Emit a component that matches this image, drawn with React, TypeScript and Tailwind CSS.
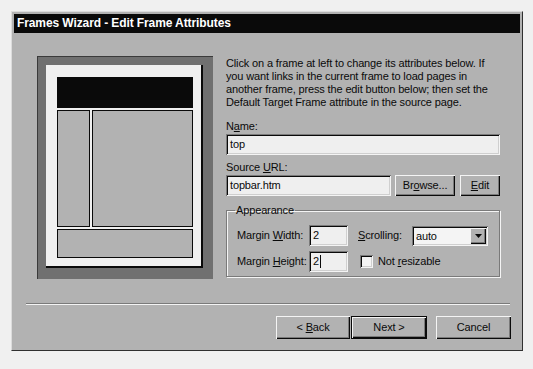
import type { ReactNode } from "react"

const raised =
    "bg-[#b2b2b2] shadow-[inset_1px_1px_0_#f4f4f4,inset_-1px_-1px_0_#0a0a0a,inset_-2px_-2px_0_#7a7a7a]"
const sunken =
    "bg-[#efefef] shadow-[inset_1px_1px_0_#7a7a7a,inset_-1px_-1px_0_#f4f4f4,inset_2px_2px_0_#0a0a0a,inset_-2px_-2px_0_#cfcfcf]"

const Key = ({ children }: { children: ReactNode }) => <span className="underline underline-offset-[1px]">{children}</span>

const Button = ({ children, width, isDefault }: { children: ReactNode; width: string; isDefault?: boolean }) => (
    <div className={`${width} flex ${isDefault ? "border border-[#0a0a0a]" : ""}`}>
        <div className={`flex-1 flex items-center justify-center ${raised}`}>
            <span className="whitespace-pre">{children}</span>
        </div>
    </div>
)

const FramePreview = () => (
    <div className="w-[176px] h-[223px] bg-[#707070] border-l border-t border-[#3a3a3a] border-r-[#f4f4f4] border-b-[#f4f4f4] pt-[8px] pl-[8px]">
        <div className="w-[157px] h-[203px] bg-[#f0f0f0] border-r-2 border-b-2 border-[#0a0a0a] pt-[12px] pl-[11px] flex flex-col gap-[2px]">
            <div className="w-[136px] h-[31px] bg-[#0a0a0a]" />
            <div className="flex gap-[2px]">
                <div className="w-[33px] h-[117px] bg-[#b2b2b2] border border-[#0a0a0a]" />
                <div className="w-[101px] h-[117px] bg-[#b2b2b2] border border-[#0a0a0a]" />
            </div>
            <div className="w-[136px] h-[29px] bg-[#b2b2b2] border border-[#0a0a0a]" />
        </div>
    </div>
)

export default function App() {
    return (
        <div
            className="w-[533px] h-[369px] bg-[#f0f0f0] pt-[11px] pl-[11px] text-[11px] tracking-[-0.14px] text-[#0a0a0a] overflow-hidden"
            style={{ fontFamily: '"Liberation Sans", Arial, sans-serif' }}
        >
            <div className="w-[512px] h-[340px] bg-[#b2b2b2] border border-[#dcdcdc] border-r-[#303030] border-b-[#303030] p-[2px] flex flex-col">
                <div className="h-[19px] bg-[#0a0a0a] text-white font-bold text-[12px] tracking-[-0.1px] leading-[19px] pl-[3px]">
                    Frames Wizard - Edit Frame Attributes
                </div>

                <div className="flex gap-[13px] pt-[23px] pl-[23px]">
                    <FramePreview />

                    <div className="w-[274px] flex flex-col">
                        <p className="leading-[13px] mt-[1px]">
                            Click on a frame at left to change its attributes below. If
                            <br />
                            you want links in the current frame to load pages in
                            <br />
                            another frame, press the edit button below; then set the
                            <br />
                            Default Target Frame attribute in the source page.
                        </p>

                        <div className="mt-[11px] leading-[13px]">
                            N<Key>a</Key>me:
                        </div>
                        <div className={`mt-[1px] h-[21px] w-[274px] pl-[4px] leading-[21px] ${sunken}`}>top</div>

                        <div className="mt-[6px] leading-[13px]">
                            Source <Key>U</Key>RL:
                        </div>
                        <div className="mt-[1px] flex h-[21px]">
                            <div className={`w-[165px] pl-[4px] leading-[21px] ${sunken}`}>topbar.htm</div>
                            <div className="ml-[4px] flex">
                                <Button width="w-[60px]">
                                    Br<Key>o</Key>wse...
                                </Button>
                            </div>
                            <div className="ml-[5px] flex">
                                <Button width="w-[40px]">
                                    <Key>E</Key>dit
                                </Button>
                            </div>
                        </div>

                        <fieldset className="mt-[8px] h-[73px] border border-[#7a7a7a] shadow-[1px_1px_0_#f4f4f4,inset_1px_1px_0_#f4f4f4] px-[10px]">
                            <legend className="ml-[-2px] px-[1px] leading-[13px]">Appearance</legend>
                            <div className="mt-[8px] flex items-center h-[21px]">
                                <span className="w-[72px]">
                                    Margin <Key>W</Key>idth:
                                </span>
                                <div className={`w-[39px] h-[21px] pl-[4px] leading-[21px] ${sunken}`}>2</div>
                                <span className="ml-[10px] w-[54px]">
                                    <Key>S</Key>crolling:
                                </span>
                                <div className={`w-[76px] h-[20px] flex p-[2px] ${sunken} bg-[#f4f4f4]`}>
                                    <span className="flex-1 pl-[2px] leading-[16px]">auto</span>
                                    <div className={`w-[16px] h-[16px] flex items-center justify-center ${raised}`}>
                                        <svg width="7" height="4" viewBox="0 0 7 4">
                                            <path d="M0 0h7L3.5 4z" fill="#0a0a0a" />
                                        </svg>
                                    </div>
                                </div>
                            </div>
                            <div className="mt-[5px] flex items-center h-[21px]">
                                <span className="w-[72px]">
                                    Margin <Key>H</Key>eight:
                                </span>
                                <div className={`w-[39px] h-[21px] pl-[4px] leading-[21px] flex items-center ${sunken}`}>
                                    2<span className="w-px h-[13px] bg-[#0a0a0a] ml-[1px]" />
                                </div>
                                <div className={`ml-[12px] w-[13px] h-[13px] ${sunken} bg-[#f4f4f4]`} />
                                <span className="ml-[5px]">
                                    Not <Key>r</Key>esizable
                                </span>
                            </div>
                        </fieldset>
                    </div>
                </div>

                <div className="mt-[24px] ml-[12px] w-[484px] h-[2px] border-t border-[#7a7a7a] border-b border-b-[#f4f4f4]" />

                <div className="mt-[11px] mr-[9px] flex justify-end h-[23px]">
                    <Button width="w-[74px]">
                        {"< "}
                        <Key>B</Key>ack
                    </Button>
                    <div className="ml-[1px] flex">
                        <Button width="w-[76px]" isDefault>
                            {"Next >"}
                        </Button>
                    </div>
                    <div className="ml-[9px] flex">
                        <Button width="w-[75px]">Cancel</Button>
                    </div>
                </div>
            </div>
        </div>
    )
}
